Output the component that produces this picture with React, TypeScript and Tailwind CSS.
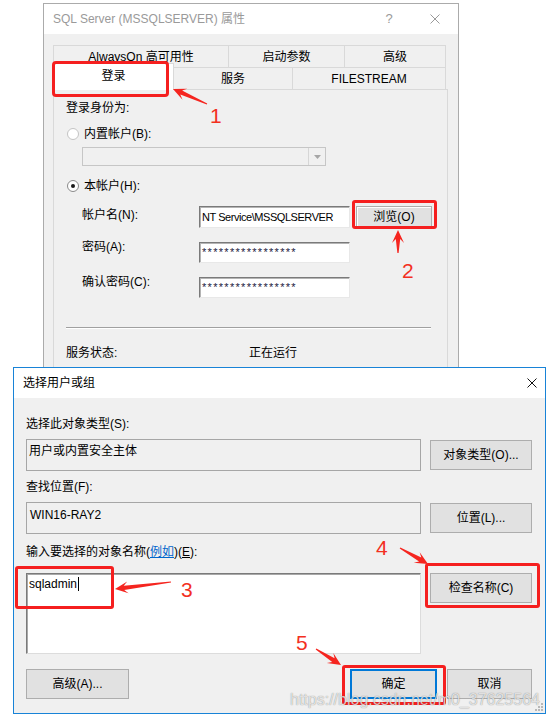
import React from "react";

type Pt = [number, number];

// tapered red arrow, thin at the tail, barbed head at h
function arrowPoints(t: Pt, h: Pt, head = 11, headW = 6, shaftW = 2.2) {
  const dx = h[0] - t[0];
  const dy = h[1] - t[1];
  const len = Math.hypot(dx, dy);
  const ux = dx / len;
  const uy = dy / len;
  const nx = -uy;
  const ny = ux;
  const bx = h[0] - ux * head;
  const by = h[1] - uy * head;
  const pts: Pt[] = [
    [t[0] + nx * 0.6, t[1] + ny * 0.6],
    [bx + nx * shaftW + ux * 2, by + ny * shaftW + uy * 2],
    [bx + nx * headW - ux * 2, by + ny * headW - uy * 2],
    h,
    [bx - nx * headW - ux * 2, by - ny * headW - uy * 2],
    [bx - nx * shaftW + ux * 2, by - ny * shaftW + uy * 2],
    [t[0] - nx * 0.6, t[1] - ny * 0.6],
  ];
  return pts.map((p) => `${p[0].toFixed(1)},${p[1].toFixed(1)}`).join(" ");
}

const arrows: { t: Pt; h: Pt }[] = [
  { t: [207, 104], h: [173, 89] },
  { t: [398, 253], h: [398, 230] },
  { t: [171, 582], h: [115, 589] },
  { t: [400, 548], h: [428, 564] },
  { t: [316, 649], h: [341, 665] },
];

const CloseX = ({ color, size = 10 }: { color: string; size?: number }) => (
  <svg width={size} height={size} viewBox="0 0 10 10">
    <path d="M0.5 0.5 L9.5 9.5 M9.5 0.5 L0.5 9.5" stroke={color} strokeWidth="1" />
  </svg>
);

const Radio = ({ checked }: { checked?: boolean }) => (
  <span
    className={
      checked
        ? "flex h-[12px] w-[12px] items-center justify-center rounded-full border border-[#8a8a8a] bg-white"
        : "flex h-[12px] w-[12px] items-center justify-center rounded-full border border-[#c4c4c4] bg-white"
    }
  >
    {checked && <span className="h-[4px] w-[4px] rounded-full bg-[#1a1a1a]" />}
  </span>
);

const Field = ({ children }: { children?: React.ReactNode }) => (
  <div className="flex h-full w-[151px] items-center border border-t-[#7a7a7a] border-l-[#7a7a7a] border-r-[#e8e8e8] border-b-[#e8e8e8] bg-white pl-[2px] shadow-[inset_1px_1px_0_#b4b4b4]">
    {children}
  </div>
);

const Btn = ({ children, className = "" }: { children: React.ReactNode; className?: string }) => (
  <div
    className={`flex items-center justify-center border border-[#adadad] bg-[#e1e1e1] text-[12px] text-black ${className}`}
  >
    {children}
  </div>
);

const Stars = () => (
  <span className="font-['Liberation_Sans',sans-serif] text-[11px] leading-none tracking-[1.3px] text-[#1d2040]">
    *****************
  </span>
);

const PropertiesDialog = () => (
  <div className="absolute left-[43px] top-[3px] h-[400px] w-[416px] border border-[#ababab] bg-[#f0f0f0]">
    <div className="flex h-[30px] items-center bg-white pl-[9px] text-[12px] text-[#9a9a9a]">
      <span className="flex-1">SQL Server (MSSQLSERVER) 属性</span>
      <span className="w-[14px] text-center text-[13px]">?</span>
      <span className="ml-[34px] mr-[18px]">
        <CloseX color="#9a9a9a" />
      </span>
    </div>

    <div className="ml-[9px] mt-[11px] w-[395px] text-[12px] text-black">
      <div className="flex h-[22px] w-[393px]">
        <div className="flex w-[175px] items-center justify-center border-l border-t border-[#d9d9d9]">AlwaysOn 高可用性</div>
        <div className="flex w-[116px] items-center justify-center border-l border-t border-[#d9d9d9]">启动参数</div>
        <div className="flex w-[102px] items-center justify-center border-l border-r border-t border-[#d9d9d9]">高级</div>
      </div>
      <div className="flex h-[22px] w-[393px]">
        <div className="relative z-10 -mt-[4px] flex h-[27px] w-[121px] items-center justify-center border-l border-r border-t border-[#d9d9d9] bg-white pb-[2px]">
          登录
        </div>
        <div className="flex w-[118px] items-center justify-center border-t border-[#d9d9d9]">服务</div>
        <div className="flex w-[154px] items-center justify-center border-l border-r border-t border-[#d9d9d9]">FILESTREAM</div>
      </div>

      <div className="h-[300px] w-[395px] border border-[#d9d9d9] bg-[#f0f0f0] pl-[12px] pt-[10px] leading-[16px]">
        <div className="h-[16px]">登录身份为:</div>

        <div className="mt-[10px] flex h-[16px] items-center">
          <span className="ml-[1px]"><Radio /></span>
          <span className="ml-[5px]">内置帐户(B):</span>
        </div>
        <div className="ml-[16px] mt-[5px] flex h-[19px] w-[244px] justify-end border border-[#c6c6c6] bg-[#f0f0f0]">
          <div className="flex w-[17px] items-center justify-center border-l border-[#d6d6d6]">
            <svg width="7" height="4" viewBox="0 0 7 4">
              <path d="M0 0 H7 L3.5 4 Z" fill="#a6a6a6" />
            </svg>
          </div>
        </div>

        <div className="mt-[12px] flex h-[16px] items-center">
          <span className="ml-[1px]"><Radio checked /></span>
          <span className="ml-[5px]">本帐户(H):</span>
        </div>

        <div className="mt-[12px] flex h-[22px] items-start">
          <span className="ml-[16px] mt-[1px] w-[117px]">帐户名(N):</span>
          <Field>
            <span className="font-['Liberation_Sans',sans-serif] text-[11px] tracking-[-0.45px]">NT Service\MSSQLSERVER</span>
          </Field>
          <Btn className="ml-[6px] h-[22px] w-[76px] shadow-[inset_1px_1px_0_#ffffff]">浏览(O)</Btn>
        </div>

        <div className="mt-[14px] flex h-[21px] items-start">
          <span className="-mt-[3px] ml-[16px] w-[117px]">密码(A):</span>
          <Field>
            <Stars />
          </Field>
        </div>

        <div className="mt-[14px] flex h-[21px] items-start">
          <span className="-mt-[3px] ml-[16px] w-[117px]">确认密码(C):</span>
          <Field>
            <Stars />
          </Field>
        </div>

        <div className="mt-[29px] h-[2px] w-[365px] border-b border-t border-b-white border-t-[#a0a0a0]" />

        <div className="mt-[16px] flex h-[16px]">
          <span className="w-[183px]">服务状态:</span>
          <span>正在运行</span>
        </div>
      </div>
    </div>
  </div>
);

const SelectUserDialog = () => (
  <div className="absolute left-[13px] top-[367px] h-[347px] w-[533px] border border-[#1883d7] bg-[#f0f0f0] text-[12px] leading-[16px] text-black">
    <div className="flex h-[30px] items-center bg-white pl-[9px]">
      <span className="flex-1">选择用户或组</span>
      <span className="mr-[8px]">
        <CloseX color="#111111" />
      </span>
    </div>

    <div className="pl-[12px] pt-[18px]">
      <div className="h-[16px]">选择此对象类型(S):</div>
      <div className="mt-[7px] grid grid-cols-[395px_102px] gap-x-[9px]">
        <div className="h-[32px] border border-[#a6a6a6] bg-[#f0f0f0] pl-[2px] pt-[3px]">用户或内置安全主体</div>
        <Btn className="mt-[1px] h-[30px]">对象类型(O)...</Btn>
      </div>

      <div className="mt-[8px] h-[16px]">查找位置(F):</div>
      <div className="mt-[7px] grid grid-cols-[395px_102px] gap-x-[9px]">
        <div className="h-[32px] border border-[#a6a6a6] bg-[#f0f0f0] pl-[3px] pt-[4px]">WIN16-RAY2</div>
        <Btn className="mt-[1px] h-[30px]">位置(L)...</Btn>
      </div>

      <div className="mt-[10px] h-[16px]">
        输入要选择的对象名称(<span className="text-[#0066cc] underline">例如</span>)(<u>E</u>):
      </div>
      <div className="mt-[13px] grid grid-cols-[395px_102px] gap-x-[9px]">
        <div className="h-[81px] border border-t-[#7a7a7a] border-l-[#7a7a7a] border-r-[#dcdcdc] border-b-[#dcdcdc] bg-white pl-[2px] pt-[2px] shadow-[inset_1px_1px_0_#a8a8a8]">
          <span className="inline-flex items-center">
            sqladmin
            <span className="ml-[1px] inline-block h-[14px] w-[1px] bg-black" />
          </span>
        </div>
        <Btn className="h-[30px]">检查名称(C)</Btn>
      </div>

      <div className="mt-[15px] flex w-[506px] justify-between">
        <Btn className="h-[30px] w-[103px]">高级(A)...</Btn>
        <div className="flex gap-[10px]">
          <div className="flex h-[30px] w-[87px] items-center justify-center border-2 border-[#0078d7] bg-[#e1e1e1]">确定</div>
          <Btn className="h-[30px] w-[85px]">取消</Btn>
        </div>
      </div>
    </div>

    <svg className="absolute bottom-[2px] right-[2px]" width="8" height="8" viewBox="0 0 8 8">
      {[
        [6, 0],
        [6, 3],
        [3, 3],
        [6, 6],
        [3, 6],
        [0, 6],
      ].map(([x, y]) => (
        <rect key={`${x}-${y}`} x={x} y={y} width="2" height="2" fill="#b8b8b8" />
      ))}
    </svg>
  </div>
);

const Annotations = () => (
  <div className="pointer-events-none absolute inset-0 z-20">
    <div className="absolute left-[52px] top-[61px] h-[36px] w-[117px] rounded-[4px] border-[3px] border-[#f51f1f]" />
    <div className="absolute left-[352px] top-[200px] h-[29px] w-[85px] rounded-[3px] border-[3px] border-[#f51f1f]" />
    <div className="absolute left-[15px] top-[566px] h-[43px] w-[99px] rounded-[3px] border-[3px] border-[#f51f1f]" />
    <div className="absolute left-[425px] top-[563px] h-[45px] w-[115px] rounded-[3px] border-[3px] border-[#f51f1f]" />
    <div className="absolute left-[342px] top-[665px] h-[40px] w-[104px] rounded-[3px] border-[3px] border-[#f51f1f]" />

    <svg className="absolute left-0 top-0" width="547" height="714">
      {arrows.map((a, i) => (
        <polygon key={i} points={arrowPoints(a.t, a.h)} fill="#f5251f" />
      ))}
    </svg>

    <div className="font-['Liberation_Sans',sans-serif] text-[21px] leading-none text-[#f3301f]">
      <span className="absolute left-[210px] top-[105px]">1</span>
      <span className="absolute left-[402px] top-[260px]">2</span>
      <span className="absolute left-[181px] top-[579px]">3</span>
      <span className="absolute left-[376px] top-[537px]">4</span>
      <span className="absolute left-[296px] top-[632px]">5</span>
    </div>

    <div className="absolute left-[290px] top-[690px] font-['Liberation_Sans',sans-serif] text-[16px] leading-[20px] text-white/75 [text-shadow:0_0_1px_rgba(0,0,0,0.5)]">
      https://blog.csdn.net/m0_37625564
    </div>
  </div>
);

export default function App() {
  return (
    <div className="relative h-[714px] w-[547px] overflow-hidden bg-white font-['Liberation_Sans','Noto_Sans_CJK_SC',sans-serif]">
      <PropertiesDialog />
      <SelectUserDialog />
      <Annotations />
    </div>
  );
}
